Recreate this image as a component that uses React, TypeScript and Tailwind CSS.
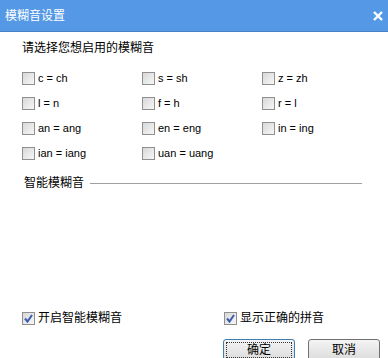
import React from 'react';

const font = { fontFamily: '"Liberation Sans", "Noto Sans CJK SC", sans-serif' };

function Box({ checked = false }: { checked?: boolean }) {
  return (
    <span className="relative flex h-[13px] w-[13px] shrink-0 items-center justify-center border border-[#8f8f8f] bg-gradient-to-br from-[#d8d8d8] to-[#f7f7f7]">
      {checked && (
        <svg width="11" height="11" viewBox="0 0 11 11" className="absolute">
          <path d="M2 5.5 L4.5 8.5 L9 2" fill="none" stroke="#3a5bb0" strokeWidth="2" />
        </svg>
      )}
    </span>
  );
}

function Option({ label, checked }: { label: string; checked?: boolean }) {
  return (
    <label className="flex h-[25px] items-center gap-[3px] text-[11px] text-black">
      <Box checked={checked} />
      <span>{label}</span>
    </label>
  );
}

const options = [
  'c = ch', 's = sh', 'z = zh',
  'l = n', 'f = h', 'r = l',
  'an = ang', 'en = eng', 'in = ing',
  'ian = iang', 'uan = uang',
];

export default function App() {
  return (
    <div className="h-[358px] w-[388px] overflow-hidden bg-white" style={font}>
      <div className="flex h-[32px] items-center justify-between border-b border-[#4a82c4] bg-[#5599e6] pl-[5px] pr-[4px]">
        <span className="text-[12px] text-white">模糊音设置</span>
        <svg width="10" height="10" viewBox="0 0 10 10" className="mr-[1px]">
          <path d="M1 1 L9 9 M9 1 L1 9" stroke="white" strokeWidth="2.4" />
        </svg>
      </div>

      <div className="pl-[22px]">
        <div className="mt-[8px] h-[16px] text-[12px] leading-[16px] text-black">请选择您想启用的模糊音</div>

        <div className="mt-[10px] grid grid-cols-[120px_120px_120px]">
          {options.map((o) => (
            <Option key={o} label={o} />
          ))}
        </div>

        <div className="mt-[9px] flex h-[16px] items-center pl-[2px] pr-[26px]">
          <span className="text-[12px] leading-[16px] text-black">智能模糊音</span>
          <div className="ml-[6px] h-px flex-1 bg-[#a0a0a0]" />
        </div>

        <div className="mt-[119px] flex h-[16px] items-center">
          <label className="flex w-[202px] items-center gap-[3px] text-[12px] text-black">
            <Box checked />
            <span>开启智能模糊音</span>
          </label>
          <label className="flex items-center gap-[3px] text-[12px] text-black">
            <Box checked />
            <span>显示正确的拼音</span>
          </label>
        </div>

        <div className="mt-[13px] flex gap-[13px] pl-[201px]">
          <button className="flex h-[22px] w-[72px] items-center justify-center rounded-[3px] border border-[#3c7fb1] bg-gradient-to-b from-[#f4f4f4] to-[#dcdcdc] p-[2px] text-[12px] text-black">
            <span className="flex h-full w-full items-center justify-center border border-dotted border-[#333]">确定</span>
          </button>
          <button className="flex h-[22px] w-[72px] items-center justify-center rounded-[3px] border border-[#707070] bg-gradient-to-b from-[#f4f4f4] to-[#dcdcdc] text-[12px] text-black">
            取消
          </button>
        </div>
      </div>
    </div>
  );
}
